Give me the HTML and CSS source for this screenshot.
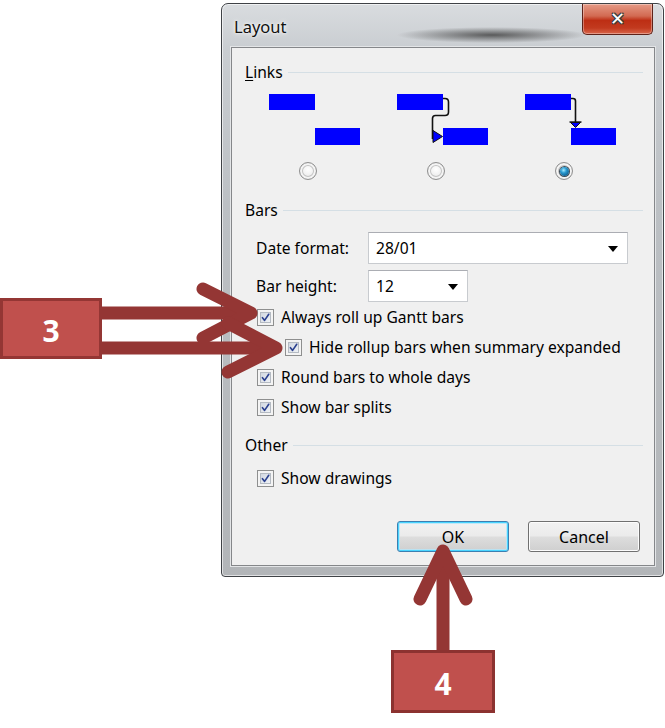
FILE: index.html
```html
<!DOCTYPE html>
<html>
<head>
<meta charset="utf-8">
<link rel="stylesheet" href="styles.css">
</head>
<body>
<div class="stage">
  <div class="window">
    <div class="titlebar">
      <span class="title">Layout</span>
      <div class="close"><span>✕</span></div>
    </div>
    <div class="client">
      <div class="group-head head-links"><span class="ghead"><u>L</u>inks</span><span class="gline"></span></div>
      <div class="link-options">
        <div class="opt">
          <svg class="diagram" width="92" height="52" viewBox="0 0 92 52">
            <rect x="0" y="0" width="46" height="16" fill="#0000ff"/>
            <rect x="46" y="34" width="45" height="17" fill="#0000ff"/>
          </svg>
          <span class="radio"></span>
        </div>
        <div class="opt">
          <svg class="diagram" width="92" height="52" viewBox="0 0 92 52">
            <rect x="0" y="0" width="46" height="16" fill="#0000ff"/>
            <rect x="46" y="34" width="45" height="17" fill="#0000ff"/>
            <path d="M46 4.5 H48 Q51.5 4.5 51.5 8 V18 Q51.5 21.5 48 21.5 H38.5 Q35.5 21.5 35.5 24.5 V45" fill="none" stroke="#111" stroke-width="1.6"/>
            <path d="M36 36.5 L45.5 42.5 L36 48.5 Z" fill="#0000ff" stroke="#111" stroke-width="1"/>
          </svg>
          <span class="radio"></span>
        </div>
        <div class="opt">
          <svg class="diagram" width="92" height="52" viewBox="0 0 92 52">
            <rect x="0" y="0" width="46" height="16" fill="#0000ff"/>
            <rect x="46" y="34" width="45" height="17" fill="#0000ff"/>
            <path d="M46 4.5 H48 Q50.5 4.5 50.5 7 V28" fill="none" stroke="#111" stroke-width="1.6"/>
            <path d="M44.5 28 H56.5" stroke="#111" stroke-width="1.4"/>
            <path d="M45.5 28.5 L55.5 28.5 L50.5 33.5 Z" fill="#0000ff" stroke="#111" stroke-width="1"/>
          </svg>
          <span class="radio checked"><span class="dot"></span></span>
        </div>
      </div>

      <div class="group-head head-bars"><span class="ghead">Bars</span><span class="gline"></span></div>
      <div class="field-row row-date">
        <span class="flabel">Date format:</span>
        <div class="select wide"><span class="sval">28/01</span><span class="arrow"></span></div>
      </div>
      <div class="field-row row-height">
        <span class="flabel">Bar height:</span>
        <div class="select narrow"><span class="sval">12</span><span class="arrow"></span></div>
      </div>

      <div class="checks">
        <div class="check"><span class="cb"><svg viewBox="0 0 10 10" class="tick"><path d="M1.6 5.2 L4 8.2 L8.6 1.4" /></svg></span><span class="ctext">Always roll up Gantt bars</span></div>
        <div class="check indent"><span class="cb"><svg viewBox="0 0 10 10" class="tick"><path d="M1.6 5.2 L4 8.2 L8.6 1.4" /></svg></span><span class="ctext">Hide rollup bars when summary expanded</span></div>
        <div class="check"><span class="cb"><svg viewBox="0 0 10 10" class="tick"><path d="M1.6 5.2 L4 8.2 L8.6 1.4" /></svg></span><span class="ctext">Round bars to whole days</span></div>
        <div class="check"><span class="cb"><svg viewBox="0 0 10 10" class="tick"><path d="M1.6 5.2 L4 8.2 L8.6 1.4" /></svg></span><span class="ctext">Show bar splits</span></div>
      </div>

      <div class="group-head head-other"><span class="ghead">Other</span><span class="gline"></span></div>
      <div class="checks other-checks">
        <div class="check"><span class="cb"><svg viewBox="0 0 10 10" class="tick"><path d="M1.6 5.2 L4 8.2 L8.6 1.4" /></svg></span><span class="ctext">Show drawings</span></div>
      </div>

      <div class="buttons">
        <div class="btn default">OK</div>
        <div class="btn">Cancel</div>
      </div>
    </div>
  </div>

  <svg class="annot" width="665" height="728" viewBox="0 0 665 728">
    <g stroke="#943634" stroke-width="13" fill="none" stroke-linecap="round" stroke-linejoin="round">
      <line x1="100" y1="313" x2="246" y2="313" stroke-linecap="butt"/>
      <polyline points="203,289 251,313 203,338"/>
      <line x1="100" y1="348" x2="271" y2="348" stroke-linecap="butt"/>
      <polyline points="228,323 276,348 228,372"/>
      <line x1="443" y1="651" x2="443" y2="556" stroke-linecap="butt"/>
      <polyline points="420,599 443,551 466,599"/>
    </g>
    <rect x="1.5" y="299.5" width="99" height="58" fill="#c0504d" stroke="#943634" stroke-width="3"/>
    <text x="51" y="342" class="num">3</text>
    <rect x="392.5" y="651.5" width="101" height="60" fill="#c0504d" stroke="#8c3230" stroke-width="3"/>
    <text x="443" y="695" class="num">4</text>
  </svg>
</div>
</body>
</html>
```

FILE: styles.css
```css
html, body {
  margin: 0;
  padding: 0;
  background: #ffffff;
}

.stage {
  position: relative;
  width: 665px;
  height: 728px;
  overflow: hidden;
  font-family: "Noto Sans", "DejaVu Sans", sans-serif;
}

.window {
  margin-left: 221px;
  margin-top: 3px;
  width: 441px;
  height: 572px;
  border: 1px solid #3f4246;
  border-radius: 7px 7px 4px 4px;
  background:
    radial-gradient(ellipse 95px 8px at 270px 31px, rgba(60,60,60,0.8), rgba(60,60,60,0) 100%),
    linear-gradient(180deg, #d9dcdf 0px, #c9cdd1 45px, #bcc0c4 200px, #b2b5b8 100%);
  box-shadow: inset 0 0 0 1px rgba(255,255,255,0.6);
  display: flex;
  flex-direction: column;
}

.titlebar {
  height: 43px;
  display: flex;
  align-items: flex-start;
  justify-content: space-between;
}

.title {
  margin-left: 12px;
  margin-top: 13px;
  font-size: 16.5px;
  line-height: 20px;
  color: #111;
  text-shadow: 0 0 6px #ffffff, 0 0 3px #ffffff;
}

.close {
  margin-right: 10px;
  width: 69px;
  height: 30px;
  border: 1px solid #5e2219;
  border-top: none;
  border-radius: 0 0 5px 5px;
  background: linear-gradient(180deg, #e59a86 0%, #d26a52 40%, #bd2e14 55%, #c23a1f 80%, #d9664a 100%);
  box-shadow: inset 0 0 0 1px rgba(255,255,255,0.35);
  display: flex;
  align-items: center;
  justify-content: center;
}

.close span {
  color: #ffffff;
  font-family: "DejaVu Sans", sans-serif;
  font-weight: bold;
  font-size: 18px;
  line-height: 1;
  text-shadow: 1px 1px 0 #3e3e3e, -1px -1px 0 #3e3e3e, 1px -1px 0 #3e3e3e, -1px 1px 0 #3e3e3e;
}

.client {
  margin: 0 8px 10px 9px;
  flex: 1;
  border: 1px solid #85878a;
  background: #f0f0f0;
  box-shadow: 0 0 0 1px #e3e5e7;
  display: flex;
  flex-direction: column;
  padding: 0 0 0 13px;
  color: #000;
  font-size: 15.6px;
}

.group-head {
  display: flex;
  align-items: center;
  height: 20px;
  padding-right: 11px;
}

.ghead {
  line-height: 20px;
  white-space: nowrap;
}

.ghead u {
  text-decoration-thickness: 1px;
  text-underline-offset: 2px;
}

.gline {
  flex: 1;
  height: 1px;
  background: #d5dfe5;
  margin-left: 5px;
}

.head-links { margin-top: 14px; }
.head-bars { margin-top: 20px; }
.head-other { margin-top: 13px; }

.link-options {
  display: flex;
  padding-left: 24px;
  margin-top: 12px;
}

.opt {
  width: 128px;
  display: flex;
  flex-direction: column;
}

.diagram {
  display: block;
}

.radio {
  margin-top: 16px;
  margin-left: 30px;
  width: 16px;
  height: 16px;
  border-radius: 50%;
  border: 1px solid #8f8f8f;
  background: radial-gradient(circle at 50% 40%, #ffffff 0%, #f2f2f2 40%, #d4d4d4 100%);
  box-shadow: inset 0 0 0 2px #f4f4f4, inset 0 0 0 3px #c4c4c4;
  display: flex;
  align-items: center;
  justify-content: center;
  box-sizing: content-box;
}

.radio.checked .dot {
  width: 9px;
  height: 9px;
  border-radius: 50%;
  background: radial-gradient(circle at 40% 35%, #a8ecff 0%, #2a9ad0 35%, #0b5a8c 80%, #0a3f66 100%);
  box-shadow: 0 0 0 1px #3e4e5a;
}

.field-row {
  display: flex;
  align-items: center;
  height: 32px;
  padding-left: 11px;
}

.row-date { margin-top: 12px; }
.row-height { margin-top: 6px; }

.flabel {
  width: 112px;
  white-space: nowrap;
}

.select {
  border: 1px solid #c8cbcf;
  border-top-color: #abadb3;
  background: #ffffff;
  display: flex;
  align-items: center;
  justify-content: space-between;
  padding: 0 9px 0 7px;
  box-sizing: border-box;
  height: 32px;
}

.select.wide { width: 260px; }
.select.narrow { width: 100px; }

.arrow {
  width: 0;
  height: 0;
  border-left: 5px solid transparent;
  border-right: 5px solid transparent;
  border-top: 6px solid #000;
  margin-top: 2px;
}

.checks {
  display: flex;
  flex-direction: column;
  margin-top: 0;
  padding-left: 12px;
}

.other-checks { margin-top: 8px; }

.check {
  height: 30px;
  display: flex;
  align-items: center;
}

.check.indent {
  padding-left: 28px;
}

.cb {
  width: 17px;
  height: 17px;
  box-sizing: border-box;
  border: 1px solid #8e8f8f;
  background: #f4f4f4;
  padding: 2px;
  margin-right: 7px;
  display: flex;
}

.tick {
  width: 11px;
  height: 11px;
  background: linear-gradient(135deg, #d2d8e1, #eef1f5);
  border: 1px solid #b4bac2;
  box-sizing: border-box;
}

.tick path {
  fill: none;
  stroke: #2b418f;
  stroke-width: 1.8;
  stroke-linecap: round;
  stroke-linejoin: round;
}

.ctext {
  white-space: nowrap;
  line-height: 20px;
}

.buttons {
  display: flex;
  margin-top: 28px;
  padding-left: 152px;
  gap: 19px;
}

.btn {
  width: 112px;
  height: 31px;
  box-sizing: border-box;
  border: 1px solid #707070;
  border-radius: 3px;
  background: linear-gradient(180deg, #f2f2f2 0%, #ebebeb 48%, #dddddd 52%, #cfcfcf 100%);
  box-shadow: inset 0 0 0 1px #fcfcfc;
  display: flex;
  align-items: center;
  justify-content: center;
  font-size: 16px;
}

.btn.default {
  border-color: #3c7fb1;
  box-shadow: inset 0 0 0 1px #48d4ff, inset 0 0 0 2px rgba(180,230,250,0.8);
}

.annot {
  position: absolute;
  left: 0;
  top: 0;
  pointer-events: none;
}

.num {
  fill: #ffffff;
  font-family: "Open Sans", "Liberation Sans", sans-serif;
  font-weight: bold;
  font-size: 30px;
  text-anchor: middle;
}
```
